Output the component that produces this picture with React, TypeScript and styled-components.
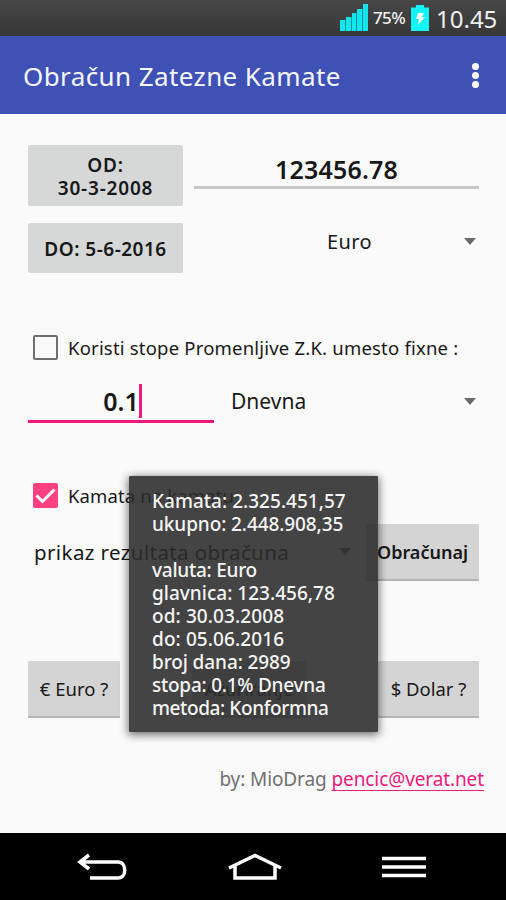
import styled, { createGlobalStyle } from 'styled-components'

const App = () => {
  return (
    <>
      <GlobalStyle />
      <Screen>
        <StatusBar>
          <svg width="29" height="31" viewBox="0 0 29 31">
            <path
              fill="#0b8f96"
              d="M4 20h2v11H4zM10 17h2v14h-2zM16 13h1v18h-1zM21 9h2v22h-2z"
            />
            <path
              fill="#14e6ee"
              d="M0 20h5v11H0zM6 17h5v14H6zM12 13h4v18h-4zM17 9h5v22h-5zM23 4h5v27h-5z"
            />
          </svg>
          <Percent>75%</Percent>
          <svg width="18" height="32" viewBox="0 0 18 32">
            <path fill="#14f2fa" d="M5 5h8v2.500h5V31H0V7.500h5z" />
            <path fill="#fff" d="M7 13h6l-2 4h3l-7 8 1-6H5z" />
          </svg>
          <Clock>10.45</Clock>
        </StatusBar>
        <AppBar>
          <Title>Obračun Zatezne Kamate</Title>
          <Menu>
            <Dot />
            <Dot />
            <Dot />
          </Menu>
        </AppBar>
        <Content>
          <PeriodRow>
            <DateColumn>
              <DateButton $height={61} $spacing={0.8}>
                OD:
                <br />
                30-3-2008
              </DateButton>
              <DateButton $height={50} $spacing={0.5}>
                DO: 5-6-2016
              </DateButton>
            </DateColumn>
            <AmountColumn>
              <Amount>123456.78</Amount>
              <Currency>
                <Label $size={20} $spacing={0.4}>
                  Euro
                </Label>
                <Arrow />
              </Currency>
            </AmountColumn>
          </PeriodRow>
          <CheckRow>
            <Checkbox />
            <Label $size={18.5} $spacing={0.2}>
              Koristi stope Promenljive Z.K. umesto fixne :
            </Label>
          </CheckRow>
          <RateRow>
            <Rate>
              0.1
              <Cursor />
            </Rate>
            <Period>
              <Label $size={21}>Dnevna</Label>
              <Arrow />
            </Period>
          </RateRow>
          <CompoundRow>
            <Checkbox $checked>
              <svg width="25" height="25" viewBox="0 0 25 25">
                <path
                  d="M3.500 12.500l6 6L21.500 6.500"
                  fill="none"
                  stroke="#fff"
                  strokeWidth="3"
                />
              </svg>
            </Checkbox>
            <Label $size={18.5} $spacing={0.12}>
              Kamata na kamatu
            </Label>
          </CompoundRow>
          <ResultRow>
            <Result>
              <Label $size={20.5} $spacing={0.4}>
                prikaz rezultata obračuna
              </Label>
              <Arrow />
            </Result>
            <Button $width={113} $bold>
              Obračunaj
            </Button>
          </ResultRow>
          <ButtonRow>
            <Button $width={92}>€ Euro ?</Button>
            <Button $width={115}>Ažuriranje</Button>
            <Button $width={101}>$ Dolar ?</Button>
          </ButtonRow>
          <Author>
            by: MioDrag <Mail>pencic@verat.net</Mail>
          </Author>
          <Toast>
            <Line $spacing={0.12}>Kamata: 2.325.451,57</Line>
            <Line>ukupno: 2.448.908,35</Line>
            <Line />
            <Line $spacing={-0.15}>valuta: Euro</Line>
            <Line $spacing={0.12}>glavnica: 123.456,78</Line>
            <Line $spacing={0.2}>od: 30.03.2008</Line>
            <Line $spacing={0.2}>do: 05.06.2016</Line>
            <Line>broj dana: 2989</Line>
            <Line $spacing={-0.15}>stopa: 0.1% Dnevna</Line>
            <Line $spacing={-0.3}>metoda: Konformna</Line>
          </Toast>
        </Content>
        <NavBar>
          <svg width="52" height="28" viewBox="0 0 52 28">
            <path d="M12 2L3 9l9 7M4 9h37c9 0 9 16 0 16H13" />
          </svg>
          <svg width="54" height="28" viewBox="0 0 54 28">
            <path d="M1 15L27 2.500 53 15M7 13v12h40V13" />
          </svg>
          <svg width="46" height="28" viewBox="0 0 46 28">
            <path d="M1 5.500h44M1 14h44M1 22.500h44" />
          </svg>
        </NavBar>
      </Screen>
    </>
  )
}

const GlobalStyle = createGlobalStyle`
  * {
    box-sizing: border-box;
  }
  body {
    margin: 0;
  }
  svg {
    display: block;
    flex: none;
  }
`

const Screen = styled.div`
  display: flex;
  flex-direction: column;
  width: 506px;
  height: 900px;
  overflow: hidden;
  background: #fafafa;
  color: #181818;
  font-family: 'Noto Sans', 'Open Sans', sans-serif;
  white-space: nowrap;
`

const StatusBar = styled.div`
  display: flex;
  height: 36px;
  padding-left: 340px;
  background: linear-gradient(#474747, #373737);
  color: #f0f0f0;
`

const Percent = styled.span`
  width: 34px;
  margin: 0 4px;
  font-size: 17px;
  font-weight: 500;
  line-height: 36px;
  letter-spacing: -0.6px;
`

const Clock = styled.span`
  margin-left: 7px;
  font-size: 24px;
  line-height: 37px;
`

const AppBar = styled.header`
  display: flex;
  align-items: center;
  justify-content: space-between;
  height: 78px;
  padding: 0 27px 0 23px;
  background: #3f51b5;
  color: #f5f6ff;
`

const Title = styled.h1`
  margin: 1px 0 0;
  font-size: 26px;
  font-weight: 400;
  letter-spacing: 0.4px;
`

const Menu = styled.div`
  display: flex;
  flex-direction: column;
  gap: 2px;
`

const Dot = styled.i`
  width: 7px;
  height: 7px;
  border-radius: 50%;
  background: #fff;
`

const Content = styled.main`
  position: relative;
  height: 719px;
  padding-top: 31px;
`

const PeriodRow = styled.div`
  display: flex;
  gap: 11px;
  height: 128px;
  padding: 0 27px 0 28px;
`

const DateColumn = styled.div`
  display: flex;
  flex-direction: column;
  gap: 17px;
  width: 155px;
`

const DateButton = styled.button<{ $height: number; $spacing: number }>`
  height: ${({ $height }) => $height}px;
  padding: 3px 0 0;
  border: 0;
  border-radius: 2px;
  background: #d6d7d7;
  color: #181818;
  font: 600 19px/23px 'Noto Sans', sans-serif;
  letter-spacing: ${({ $spacing }) => $spacing}px;
`

const AmountColumn = styled.div`
  flex: 1;
`

const Amount = styled.div`
  height: 44px;
  border-bottom: 3px solid #c8c8c8;
  font-size: 25px;
  font-weight: 600;
  line-height: 48px;
  letter-spacing: 0.2px;
  text-align: center;
`

const Currency = styled.div`
  display: flex;
  align-items: center;
  justify-content: space-between;
  height: 40px;
  margin-top: 32px;
  padding: 0 3px 0 133px;
`

const Label = styled.span<{ $size: number; $spacing?: number }>`
  font-size: ${({ $size }) => $size}px;
  letter-spacing: ${({ $spacing = 0 }) => $spacing}px;
`

const Arrow = styled.i`
  border: 6px solid transparent;
  border-top: 7px solid #6b6b6b;
  border-bottom: 0;
`

const CheckRow = styled.div`
  display: flex;
  align-items: center;
  gap: 10px;
  height: 30px;
  margin-top: 59px;
  padding-left: 33px;
`

const Checkbox = styled.span<{ $checked?: boolean }>`
  width: 25px;
  height: 25px;
  border: ${({ $checked }) => ($checked ? '0' : '2px solid #707070')};
  border-radius: 2px;
  background: ${({ $checked }) => ($checked ? '#ff4081' : 'transparent')};
`

const RateRow = styled.div`
  display: flex;
  gap: 17px;
  height: 42px;
  margin-top: 19px;
  padding: 0 30px 0 28px;
`

const Rate = styled.div`
  display: flex;
  justify-content: center;
  width: 186px;
  height: 42px;
  padding-left: 3px;
  border-bottom: 3px solid #f0197d;
  font-size: 25px;
  font-weight: 600;
  line-height: 41px;
`

const Cursor = styled.i`
  width: 3px;
  height: 34px;
  margin-top: 3px;
  background: #f0197d;
`

const Period = styled.div`
  display: flex;
  flex: 1;
  align-items: center;
  justify-content: space-between;
  height: 40px;
`

const CompoundRow = styled(CheckRow)`
  margin-top: 57px;
`

const ResultRow = styled.div`
  display: flex;
  gap: 12px;
  height: 57px;
  margin-top: 14px;
  padding: 0 27px 0 34px;
`

const Result = styled.div`
  display: flex;
  align-items: center;
  justify-content: space-between;
  width: 320px;
  height: 55px;
  padding-right: 3px;
`

const Button = styled.button<{ $width: number; $bold?: boolean }>`
  width: ${({ $width }) => $width}px;
  height: 57px;
  padding: 0;
  border: 0;
  border-bottom: 2px solid #b4b4b4;
  border-radius: 1px;
  background: #d4d4d4;
  color: #181818;
  font: ${({ $bold }) => ($bold ? '600 18px' : '400 18.5px')} 'Noto Sans',
    sans-serif;
`

const ButtonRow = styled.div`
  display: flex;
  justify-content: space-between;
  margin-top: 80px;
  padding: 0 27px 0 28px;
`

const Author = styled.p`
  margin: 48px 22px 0;
  color: #707070;
  font-size: 19px;
  line-height: 27px;
  letter-spacing: -0.1px;
  text-align: right;
`

const Mail = styled.a`
  color: #f0197d;
  text-decoration: underline;
  text-decoration-skip-ink: none;
  text-decoration-thickness: 1px;
  text-underline-offset: 4px;
`

const Toast = styled.div`
  position: absolute;
  top: 362px;
  left: 129px;
  width: 249px;
  height: 256px;
  padding: 14px 23px;
  border-radius: 1px;
  background: rgba(44, 44, 44, 0.885);
  box-shadow: 0 2px 8px 1px rgba(0, 0, 0, 0.55);
  color: #f5f5f5;
`

const Line = styled.div<{ $spacing?: number }>`
  height: 23px;
  font-size: 19px;
  font-weight: 500;
  line-height: 23px;
  letter-spacing: ${({ $spacing = 0 }) => $spacing - 0.1}px;
`

const NavBar = styled.nav`
  display: flex;
  align-items: center;
  justify-content: space-between;
  height: 67px;
  padding: 0 79px 0 77px;
  background: #000;

  path {
    fill: none;
    stroke: #fff;
    stroke-width: 3.5;
  }
`

export default App
